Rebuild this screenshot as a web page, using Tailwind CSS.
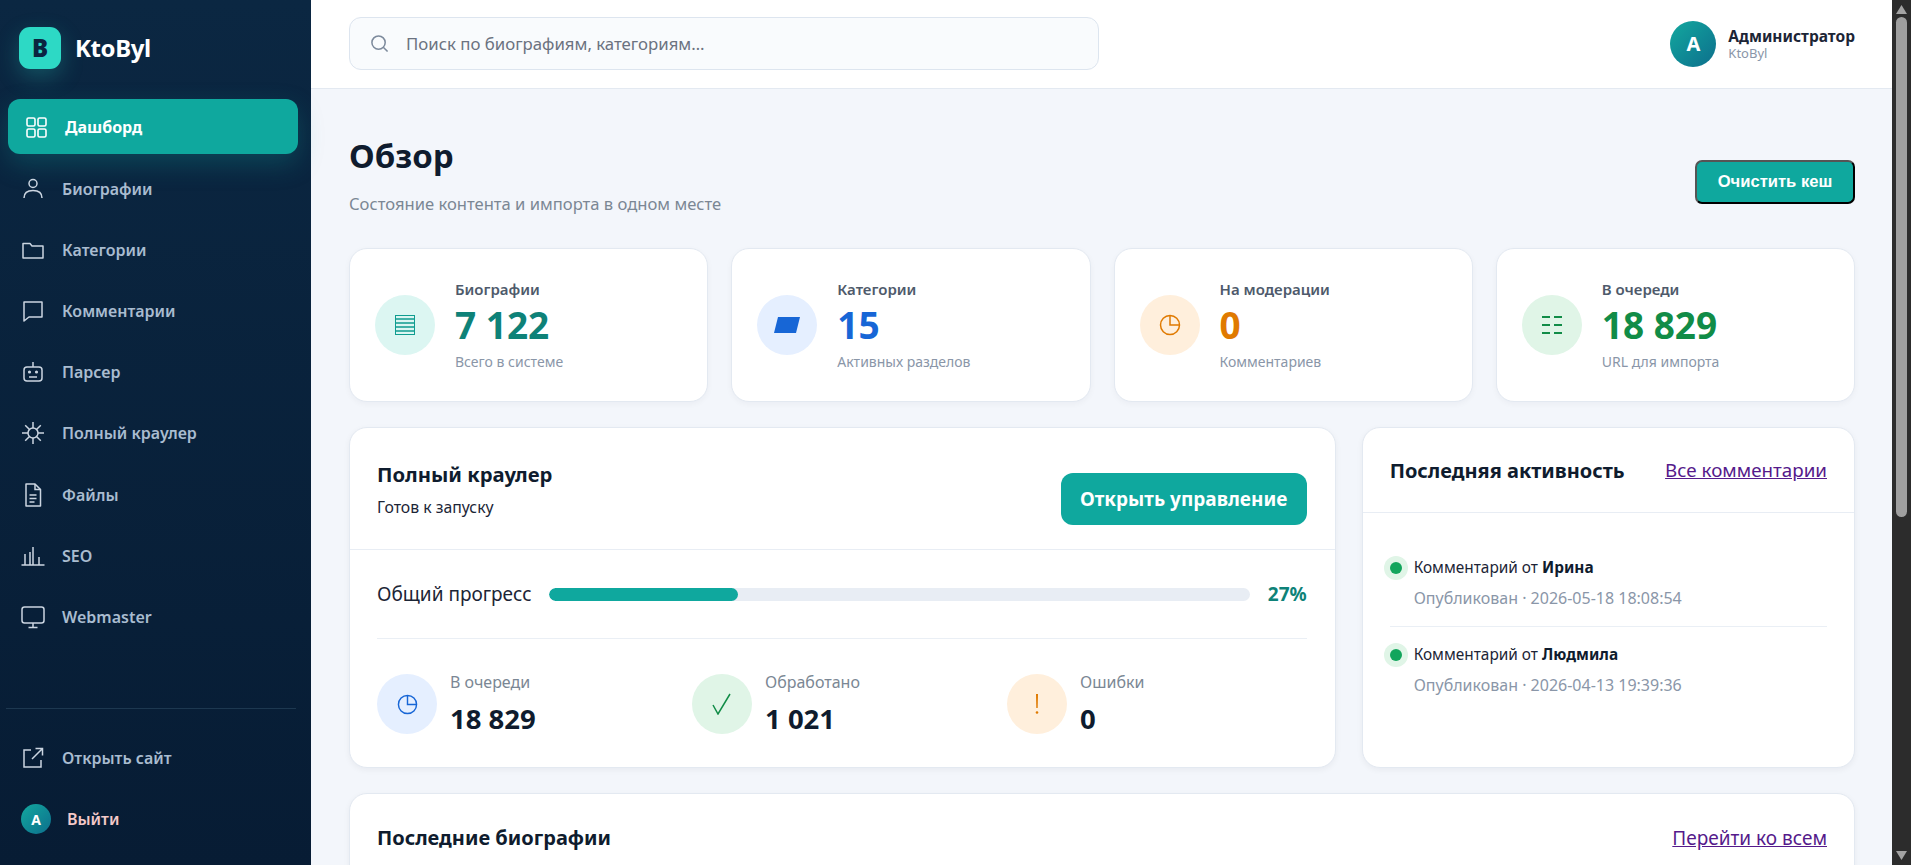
<!DOCTYPE html>
<html lang="ru">
<head>
  <meta charset="UTF-8" />
  <title>KtoByl — Дашборд</title>
  <script src="https://cdn.jsdelivr.net/npm/@tailwindcss/browser@4"></script>
</head>
<body class="h-screen overflow-hidden flex bg-[#f3f6fb] text-[#0f1c2e] font-['Noto_Sans',sans-serif]">
  <!-- sidebar -->
  <aside class="w-[311px] shrink-0 h-full flex flex-col bg-gradient-to-b from-[#0b2742] to-[#071c34] px-[8px]">
    <div class="h-[99px] shrink-0 flex items-start pt-[27px] pl-[11px] gap-[14px]">
      <div class="w-[42px] h-[42px] rounded-[11px] bg-[#2dd9c5] flex items-center justify-center text-[#0a2540] text-[24px] font-black shadow-[0_8px_22px_rgba(45,217,197,0.25)]">B</div>
      <div class="text-white text-[24px] font-bold leading-[42px] tracking-[-0.4px]">KtoByl</div>
    </div>

    <nav class="w-[290px] flex flex-col gap-[6.2px] text-[16px] font-semibold text-[#a9bcd0]">
      <a class="h-[55px] mb-[1px] rounded-[12px] bg-[#0fa89e] text-white font-bold flex items-center pl-[16px] gap-[17px] shadow-[0_10px_26px_rgba(15,168,158,0.25)]">
        <svg class="w-[24px] h-[24px]" viewBox="0 0 24 24" fill="none" stroke="currentColor" stroke-width="1.6"><rect x="3" y="3" width="8" height="8" rx="1.5"/><rect x="14" y="3" width="8" height="8" rx="1.5"/><rect x="3" y="14" width="8" height="8" rx="1.5"/><rect x="14" y="14" width="8" height="8" rx="1.5"/></svg>
        <span>Дашборд</span>
      </a>
      <a class="h-[55px] flex items-center pl-[13px] gap-[17px]">
        <svg class="w-[24px] h-[24px] text-[#cbd5e1]" viewBox="0 0 24 24" fill="none" stroke="currentColor" stroke-width="1.5"><circle cx="12" cy="6.5" r="4"/><path d="M3 21c0-5 3.5-7.5 9-7.5s9 2.500 9 7.500"/></svg>
        <span>Биографии</span>
      </a>
      <a class="h-[55px] flex items-center pl-[13px] gap-[17px]">
        <svg class="w-[24px] h-[24px] text-[#cbd5e1]" viewBox="0 0 24 24" fill="none" stroke="currentColor" stroke-width="1.5"><path d="M2 5.500h7l2 2.500h11v12H2z" stroke-linejoin="round"/></svg>
        <span>Категории</span>
      </a>
      <a class="h-[55px] flex items-center pl-[13px] gap-[17px]">
        <svg class="w-[24px] h-[24px] text-[#cbd5e1]" viewBox="0 0 24 24" fill="none" stroke="currentColor" stroke-width="1.5"><path d="M3 3h18v15H8l-5 4z" stroke-linejoin="round"/></svg>
        <span>Комментарии</span>
      </a>
      <a class="h-[55px] flex items-center pl-[13px] gap-[17px]">
        <svg class="w-[24px] h-[24px] text-[#cbd5e1]" viewBox="0 0 24 24" fill="none" stroke="currentColor" stroke-width="1.5"><rect x="3" y="7" width="18" height="14" rx="3"/><path d="M12 7V2"/><path d="M8 17h8"/><circle cx="8.500" cy="12" r="0.800" fill="currentColor"/><circle cx="15.500" cy="12" r="0.800" fill="currentColor"/></svg>
        <span>Парсер</span>
      </a>
      <a class="h-[55px] flex items-center pl-[13px] gap-[17px]">
        <svg class="w-[24px] h-[24px] text-[#cbd5e1]" viewBox="0 0 24 24" fill="none" stroke="currentColor" stroke-width="1.5"><circle cx="12" cy="12" r="5"/><path d="M12 1v6M12 17v6M1 12h6M17 12h6M4.200 4.200l4.300 4.300M15.500 15.500l4.300 4.300M19.800 4.200l-4.300 4.300M8.500 15.500l-4.300 4.300"/></svg>
        <span>Полный краулер</span>
      </a>
      <a class="h-[55px] flex items-center pl-[13px] gap-[17px]">
        <svg class="w-[24px] h-[24px] text-[#cbd5e1]" viewBox="0 0 24 24" fill="none" stroke="currentColor" stroke-width="1.5"><path d="M5 1h9l5.500 5.500V23H5z" stroke-linejoin="round"/><path d="M14 1v5.500h5.500"/><path d="M8.500 12h7M8.500 15.500h7M8.500 19h5"/></svg>
        <span>Файлы</span>
      </a>
      <a class="h-[55px] flex items-center pl-[13px] gap-[17px]">
        <svg class="w-[24px] h-[24px] text-[#cbd5e1]" viewBox="0 0 24 24" fill="none" stroke="currentColor" stroke-width="1.500"><path d="M0.500 21h23M4 21v-11M9 21V8M12 21V3M18 21v-8"/></svg>
        <span>SEO</span>
      </a>
      <a class="h-[55px] flex items-center pl-[13px] gap-[17px]">
        <svg class="w-[24px] h-[24px] text-[#cbd5e1]" viewBox="0 0 24 24" fill="none" stroke="currentColor" stroke-width="1.5"><rect x="1" y="2" width="22" height="16" rx="2.500"/><path d="M12 18v4M7.500 22.500h9"/></svg>
        <span>Webmaster</span>
      </a>
    </nav>

    <div class="mt-auto border-t border-[#1d3850] ml-[-2px] w-[290px]"></div>
    <div class="text-[16px] font-semibold text-[#a9bcd0] pb-[31px] pt-[34px] flex flex-col gap-[31px]">
      <a class="h-[30px] flex items-center pl-[13px] gap-[17px]">
        <svg class="w-[24px] h-[24px] text-[#cbd5e1]" viewBox="0 0 24 24" fill="none" stroke="currentColor" stroke-width="1.5"><path d="M10 4H3v17h17v-7"/><path d="M11 13L21.500 2.500M14.500 2.500h7v7"/></svg>
        <span>Открыть сайт</span>
      </a>
      <a class="h-[30px] flex items-center pl-[13px] gap-[16px]">
        <span class="w-[30px] h-[30px] rounded-full bg-gradient-to-br from-[#14a89e] to-[#0e6f8c] text-white text-[14px] font-bold flex items-center justify-center">A</span>
        <span class="text-[#f4c9c9]">Выйти</span>
      </a>
    </div>
  </aside>

  <!-- main -->
  <main class="flex-1 min-w-0 h-full flex flex-col">
    <header class="h-[89px] shrink-0 bg-white border-b border-[#e3e9f1] flex items-center pl-[38px] pr-[37px] pb-[1px] justify-between">
      <div class="w-[750px] h-[53px] rounded-[12px] border border-[#dde5ef] bg-[#f9fbfd] flex items-center pl-[20px] gap-[17px] text-[16.800px] text-[#6b7280]">
        <svg class="w-[19px] h-[19px] text-[#7d8a9c]" viewBox="0 0 20 20" fill="none" stroke="currentColor" stroke-width="1.6"><circle cx="9" cy="9" r="7"/><path d="M14 14l4.500 4.500"/></svg>
        <span>Поиск по биографиям, категориям…</span>
      </div>
      <div class="flex items-center gap-[12px]">
        <div class="w-[46px] h-[46px] rounded-full bg-gradient-to-br from-[#14a89e] to-[#0e6f8c] text-white text-[20px] font-bold flex items-center justify-center">A</div>
        <div class="flex flex-col">
          <div class="text-[15.500px] font-bold leading-[20px] text-[#1c2536]">Администратор</div>
          <div class="text-[13px] leading-[15px] text-[#8a96a8]">KtoByl</div>
        </div>
      </div>
    </header>

    <div class="flex-1 min-h-0 overflow-hidden pl-[38px] pr-[37px] pt-[48px]">
      <div class="flex justify-between items-start h-[111px]">
        <div>
          <h1 class="text-[33px] font-bold leading-[38px] text-[#0f1c2e]">Обзор</h1>
          <p class="mt-[18.400px] text-[16.600px] leading-[22px] text-[#7b8794]">Состояние контента и импорта в одном месте</p>
        </div>
        <button class="mt-[23px] w-[160px] h-[44px] rounded-[7px] bg-[#0fa89e] border-2 border-t-[#555] border-l-[#555] border-r-black border-b-black text-white text-[16.600px] font-bold font-['Liberation_Sans',sans-serif]">Очистить кеш</button>
      </div>

      <div class="grid grid-cols-4 gap-[23px]">
        <div class="h-[154px] rounded-[18px] bg-white border border-[#e3e9f1] shadow-[0_2px_6px_rgba(15,28,46,0.04)] flex items-center pl-[25px] gap-[20px]">
          <div class="w-[60px] h-[60px] rounded-full bg-[#dcf6f2] flex items-center justify-center">
            <svg class="w-[20px] h-[20px] text-[#0f9c90]" viewBox="0 0 20 20" fill="none" stroke="currentColor"><rect x="0.500" y="0.500" width="19" height="19" stroke-width="1"/><path d="M0 4h20M0 8h20M0 12h20M0 16h20" stroke-width="1.500"/></svg>
          </div>
          <div>
            <div class="text-[15px] font-semibold leading-[20px] text-[#4e5a6b]">Биографии</div>
            <div class="text-[37px] font-bold leading-[46px] mt-[3px] text-[#0e8278]">7 122</div>
            <div class="text-[14px] leading-[20px] mt-[4px] text-[#8a96a8]">Всего в системе</div>
          </div>
        </div>
        <div class="h-[154px] rounded-[18px] bg-white border border-[#e3e9f1] shadow-[0_2px_6px_rgba(15,28,46,0.04)] flex items-center pl-[25px] gap-[20px]">
          <div class="w-[60px] h-[60px] rounded-full bg-[#e5efff] flex items-center justify-center">
            <svg class="w-[26px] h-[16px] text-[#1766d6]" viewBox="0 0 26 16" fill="currentColor"><path d="M4 0h22l-4 16H0z"/></svg>
          </div>
          <div>
            <div class="text-[15px] font-semibold leading-[20px] text-[#4e5a6b]">Категории</div>
            <div class="text-[37px] font-bold leading-[46px] mt-[3px] text-[#1766d6]">15</div>
            <div class="text-[14px] leading-[20px] mt-[4px] text-[#8a96a8]">Активных разделов</div>
          </div>
        </div>
        <div class="h-[154px] rounded-[18px] bg-white border border-[#e3e9f1] shadow-[0_2px_6px_rgba(15,28,46,0.04)] flex items-center pl-[25px] gap-[20px]">
          <div class="w-[60px] h-[60px] rounded-full bg-[#ffefdc] flex items-center justify-center">
            <svg class="w-[22px] h-[22px] text-[#e07a00]" viewBox="0 0 22 22" fill="none" stroke="currentColor" stroke-width="1.500"><circle cx="11" cy="11" r="9.500"/><path d="M11 1.500V11h9.500"/></svg>
          </div>
          <div>
            <div class="text-[15px] font-semibold leading-[20px] text-[#4e5a6b]">На модерации</div>
            <div class="text-[37px] font-bold leading-[46px] mt-[3px] text-[#e07a00]">0</div>
            <div class="text-[14px] leading-[20px] mt-[4px] text-[#8a96a8]">Комментариев</div>
          </div>
        </div>
        <div class="h-[154px] rounded-[18px] bg-white border border-[#e3e9f1] shadow-[0_2px_6px_rgba(15,28,46,0.04)] flex items-center pl-[25px] gap-[20px]">
          <div class="w-[60px] h-[60px] rounded-full bg-[#e0f5e7] flex items-center justify-center">
            <svg class="w-[22px] h-[20px] text-[#118c47]" viewBox="0 0 22 20" fill="none" stroke="currentColor" stroke-width="2"><path d="M1 2h8M13 2h8M1 10h8M13 10h8M1 18h8M13 18h8"/></svg>
          </div>
          <div>
            <div class="text-[15px] font-semibold leading-[20px] text-[#4e5a6b]">В очереди</div>
            <div class="text-[37px] font-bold leading-[46px] mt-[3px] text-[#118c47]">18 829</div>
            <div class="text-[14px] leading-[20px] mt-[4px] text-[#8a96a8]">URL для импорта</div>
          </div>
        </div>
      </div>

      <div class="grid grid-cols-[minmax(0,2fr)_minmax(0,1fr)] gap-[26px] mt-[25px]">
        <section class="h-[341px] rounded-[18px] bg-white border border-[#e3e9f1] shadow-[0_2px_6px_rgba(15,28,46,0.05)] flex flex-col">
          <div class="h-[122px] shrink-0 border-b border-[#e8edf4] flex items-center justify-between pl-[27px] pr-[28px]">
            <div>
              <h2 class="text-[20.300px] font-bold leading-[28px] text-[#0f1c2e]">Полный краулер</h2>
              <p class="mt-[9px] text-[15.800px] leading-[20px] text-[#1c2536]">Готов к запуску</p>
            </div>
            <a class="w-[246px] h-[52px] mt-[21px] rounded-[12px] bg-[#0fa89e] text-white text-[19px] font-bold flex items-center justify-center">Открыть управление</a>
          </div>
          <div class="pl-[27px] pr-[28px] flex-1 flex flex-col">
            <div class="h-[89px] shrink-0 border-b border-[#eaeff5] flex items-center gap-[16px]">
              <span class="w-[156px] text-[19px] text-[#1c2536] whitespace-nowrap">Общий прогресс</span>
              <div class="flex-1 h-[13px] rounded-full bg-[#e8edf4] overflow-hidden">
                <div class="h-full rounded-full bg-[#0fa89e]" style="width: 27%"></div>
              </div>
              <span class="text-[19px] font-bold text-[#0e8278] ml-[2px]">27%</span>
            </div>
            <div class="grid grid-cols-[315px_315px_1fr] pt-[32px]">
              <div class="flex items-center gap-[13px]">
                <div class="w-[60px] h-[60px] rounded-full bg-[#e5efff] flex items-center justify-center">
                  <svg class="w-[21px] h-[21px] text-[#1766d6]" viewBox="0 0 22 22" fill="none" stroke="currentColor" stroke-width="1.500"><circle cx="11" cy="11" r="9.500"/><path d="M11 1.500V11h9.500"/></svg>
                </div>
                <div>
                  <div class="text-[16px] leading-[22px] text-[#7b8794]">В очереди</div>
                  <div class="text-[27.500px] font-bold leading-[36px] mt-[8px] text-[#0f1c2e]">18 829</div>
                </div>
              </div>
              <div class="flex items-center gap-[13px]">
                <div class="w-[60px] h-[60px] rounded-full bg-[#e0f5e7] flex items-center justify-center">
                  <svg class="w-[20px] h-[22px] text-[#118c47]" viewBox="0 0 20 22" fill="none" stroke="currentColor" stroke-width="1.500"><path d="M1 12l5 9L18 1"/></svg>
                </div>
                <div>
                  <div class="text-[16px] leading-[22px] text-[#7b8794]">Обработано</div>
                  <div class="text-[27.500px] font-bold leading-[36px] mt-[8px] text-[#0f1c2e]">1 021</div>
                </div>
              </div>
              <div class="flex items-center gap-[13px]">
                <div class="w-[60px] h-[60px] rounded-full bg-[#ffefdc] flex items-center justify-center">
                  <svg class="w-[4px] h-[20px] text-[#e07a00]" viewBox="0 0 4 20" fill="currentColor"><path d="M1 0h2l-.300 14H1.300z"/><circle cx="2" cy="18.500" r="1.300"/></svg>
                </div>
                <div>
                  <div class="text-[16px] leading-[22px] text-[#7b8794]">Ошибки</div>
                  <div class="text-[27.500px] font-bold leading-[36px] mt-[8px] text-[#0f1c2e]">0</div>
                </div>
              </div>
            </div>
          </div>
        </section>

        <section class="h-[341px] rounded-[18px] bg-white border border-[#e3e9f1] shadow-[0_2px_6px_rgba(15,28,46,0.05)] flex flex-col">
          <div class="h-[85px] shrink-0 border-b border-[#e8edf4] flex items-center justify-between pl-[27px] pr-[27px] pt-[1px]">
            <h2 class="text-[20px] font-bold text-[#0f1c2e]">Последняя активность</h2>
            <a class="text-[18.800px] text-[#551a8b] underline">Все комментарии</a>
          </div>
          <div class="px-[27px] pt-[42px]">
            <div class="pb-[17px] border-b border-[#eaeff5]">
              <div class="flex items-center gap-[6px] ml-[-6px] h-[26px]">
                <span class="w-[24px] h-[24px] rounded-full bg-[#e0f5e7] flex items-center justify-center"><span class="w-[12px] h-[12px] rounded-full bg-[#12a55c]"></span></span>
                <span class="text-[15.400px] text-[#1c2536]">Комментарий от <b class="font-bold text-[#0f1c2e]">Ирина</b></span>
              </div>
              <div class="ml-[24px] mt-[6px] text-[16px] leading-[22px] text-[#8a96a8]">Опубликован · 2026-05-18 18:08:54</div>
            </div>
            <div class="pt-[15px]">
              <div class="flex items-center gap-[6px] ml-[-6px] h-[26px]">
                <span class="w-[24px] h-[24px] rounded-full bg-[#e0f5e7] flex items-center justify-center"><span class="w-[12px] h-[12px] rounded-full bg-[#12a55c]"></span></span>
                <span class="text-[15.400px] text-[#1c2536]">Комментарий от <b class="font-bold text-[#0f1c2e]">Людмила</b></span>
              </div>
              <div class="ml-[24px] mt-[6px] text-[16px] leading-[22px] text-[#8a96a8]">Опубликован · 2026-04-13 19:39:36</div>
            </div>
          </div>
        </section>
      </div>

      <section class="mt-[25px] h-[200px] rounded-[18px] bg-white border border-[#e3e9f1] shadow-[0_2px_6px_rgba(15,28,46,0.05)]">
        <div class="h-[88px] flex items-center justify-between pl-[27px] pr-[27px]">
          <h2 class="text-[20px] font-bold text-[#0f1c2e]">Последние биографии</h2>
          <a class="text-[19px] text-[#551a8b] underline">Перейти ко всем</a>
        </div>
      </section>
    </div>
  </main>

  <!-- scrollbar as drawn by the browser in the screenshot -->
  <div class="w-[19px] shrink-0 h-full bg-[#2c2c2c] flex flex-col items-center justify-between py-[5px]">
    <svg class="w-[11px] h-[9px] text-[#a3a3a3] shrink-0" viewBox="0 0 11 9" fill="currentColor"><path d="M5.500 0L11 9H0z"/></svg>
    <div class="w-[11px] h-[500px] rounded-full bg-[#9f9f9f] mt-[3px] mb-auto"></div>
    <svg class="w-[11px] h-[9px] text-[#a3a3a3] shrink-0" viewBox="0 0 11 9" fill="currentColor"><path d="M0 0h11L5.500 9z"/></svg>
  </div>
</body>
</html>
